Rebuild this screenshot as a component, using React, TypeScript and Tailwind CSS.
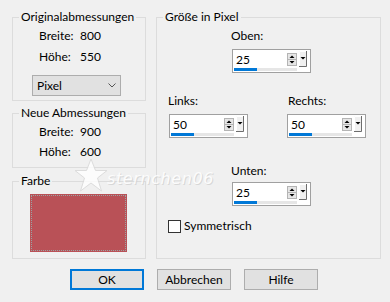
import React from "react";

const font = { fontFamily: 'Lato, "Noto Sans", sans-serif' };

function SpinArrows() {
  return (
    <svg width="10" height="13" viewBox="0 0 10 13" className="mt-[3px] shrink-0">
      <rect x="0.5" y="0.5" width="9" height="12" fill="#e6e6e6" stroke="#b4b4b4" />
      <line x1="1" y1="6.5" x2="9" y2="6.5" stroke="#b4b4b4" />
      <path d="M2.5 5 L5 2.5 L7.5 5 Z" fill="#000" />
      <path d="M2.5 8 L7.5 8 L5 10.5 Z" fill="#000" />
    </svg>
  );
}

function DropButton() {
  return (
    <svg width="8" height="16" viewBox="0 0 8 16" className="mt-[1px] ml-[2px] shrink-0">
      <rect x="0" y="0" width="8" height="16" fill="#f0f0f0" />
      <path d="M0.5 15.5 V0.5 H7.5" fill="none" stroke="#ffffff" />
      <path d="M0 15.5 H7.5 V0" fill="none" stroke="#6d6d6d" />
      <path d="M1.5 6 L6.5 6 L4 8.5 Z" fill="#000" />
    </svg>
  );
}

function Spin({ value }: { value: string }) {
  return (
    <div className="flex h-6 w-[79px] flex-col border border-[#a0a0a0] bg-white">
      <div className="flex h-[18px] items-start">
        <span className="flex-1 pl-[3px] pt-[2px] text-xs leading-4">{value}</span>
        <SpinArrows />
        <DropButton />
        <div className="w-[3px]" />
      </div>
      <div className="ml-[1px] h-[3px] w-[63px] bg-[#e6e6e6]">
        <div className="h-full w-[23px] bg-[#0078d7]" />
      </div>
    </div>
  );
}

function Legend({ children }: { children: React.ReactNode }) {
  return <legend className="ml-[6px] px-[2px] text-xs leading-4">{children}</legend>;
}

function DimRow({ label, value, className }: { label: string; value: string; className: string }) {
  return (
    <div className={"flex pl-[26px] text-xs leading-4 " + className}>
      <span className="w-[41px]">{label}</span>
      <span>{value}</span>
    </div>
  );
}

export default function App() {
  return (
    <div className="relative h-[302px] w-[390px] overflow-hidden bg-[#f0f0f0] pl-[12px] pt-[9px] text-black" style={font}>
      <div className="flex gap-[10px]">
        <div className="flex w-[134px] flex-col">
          <fieldset className="h-[92px] border border-[#dcdcdc]">
            <Legend>Originalabmessungen</Legend>
            <DimRow label="Breite:" value="800" className="mt-[3px]" />
            <DimRow label="Höhe:" value="550" className="mt-[5px]" />
            <div className="ml-[19px] mt-[10px] flex h-[21px] w-[89px] items-center justify-between border border-[#adadad] bg-[#e1e1e1] pl-[4px] pr-[4px] text-xs">
              <span>Pixel</span>
              <svg width="8" height="5" viewBox="0 0 8 5">
                <path d="M0.5 0.5 L4 4 L7.5 0.5" fill="none" stroke="#555" />
              </svg>
            </div>
          </fieldset>
          <fieldset className="mt-[4px] h-[63px] border border-[#dcdcdc]">
            <Legend>Neue Abmessungen</Legend>
            <DimRow label="Breite:" value="900" className="mt-[3px]" />
            <DimRow label="Höhe:" value="600" className="mt-[4px]" />
          </fieldset>
          <fieldset className="mt-[5px] h-[86px] border border-[#dcdcdc]">
            <Legend>Farbe</Legend>
            <div className="ml-[17px] mt-[5px] h-[58px] w-[97px] bg-[#b95157] p-[1px]">
              <div className="h-full w-full border border-dotted border-[#9aa3a3]" />
            </div>
          </fieldset>
        </div>

        <fieldset className="h-[250px] w-[225px] border border-[#dcdcdc]">
          <Legend>Größe in Pixel</Legend>
          <div className="ml-[74px] mt-[3px] text-xs leading-4">Oben:</div>
          <div className="ml-[75px] mt-[5px]">
            <Spin value="25" />
          </div>
          <div className="mt-[20px] grid grid-cols-[118px_1fr] pl-[12px]">
            <div>
              <div className="-ml-[1px] text-xs leading-4">Links:</div>
              <div className="mt-[5px]">
                <Spin value="50" />
              </div>
            </div>
            <div>
              <div className="ml-[1px] text-xs leading-4">Rechts:</div>
              <div className="mt-[5px]">
                <Spin value="50" />
              </div>
            </div>
          </div>
          <div className="ml-[74px] mt-[25px] text-xs leading-4">Unten:</div>
          <div className="ml-[75px] mt-[3px]">
            <Spin value="25" />
          </div>
          <label className="ml-[11px] mt-[12px] flex items-center gap-[3px] text-xs leading-4">
            <span className="h-[13px] w-[13px] border border-[#333] bg-white" />
            Symmetrisch
          </label>
        </fieldset>
      </div>

      <div className="ml-[58px] mt-[10px] flex gap-[13px] text-xs">
        <button className="h-[21px] w-[74px] border-2 border-[#0078d7] bg-[#e1e1e1]">OK</button>
        <button className="h-[21px] w-[74px] border border-[#adadad] bg-[#e1e1e1]">Abbrechen</button>
        <button className="h-[21px] w-[74px] border border-[#adadad] bg-[#e1e1e1]">Hilfe</button>
      </div>

      {/* watermark */}
      <div className="pointer-events-none absolute left-[74px] top-[158px] flex items-end opacity-80">
        <svg width="34" height="34" viewBox="0 0 34 34">
          <path
            d="M17 1 L21.5 12.5 L33 12.5 L23.5 20 L27.5 33 L17 25 L6.5 33 L10.5 20 L1 12.5 L12.5 12.5 Z"
            fill="#ffffff"
            stroke="#d8d8d8"
          />
        </svg>
        <span
          className="-ml-[1px] mb-[3px] text-[16px] italic leading-5 tracking-[0.6px] text-white"
          style={{ fontFamily: '"DejaVu Sans", sans-serif', textShadow: "1px 1px 0 #d2d2d2" }}
        >
          sternchen06
        </span>
      </div>
    </div>
  );
}
